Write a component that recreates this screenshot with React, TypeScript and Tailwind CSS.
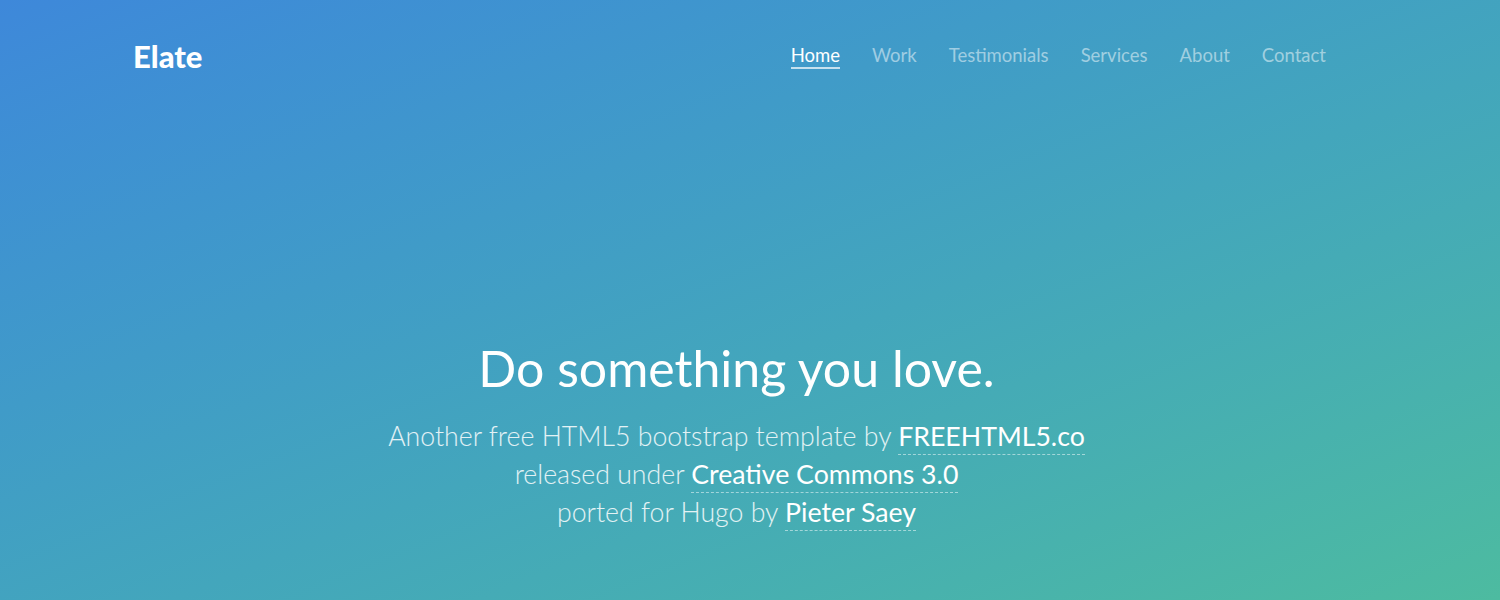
import React from 'react'

const navItems = ['Home', 'Work', 'Testimonials', 'Services', 'About', 'Contact']

function Credit({ href, children }: { href: string; children: React.ReactNode }) {
  return (
    <a
      href={href}
      className="border-b border-dashed border-white/50 pb-[2px] font-normal text-white"
    >
      {children}
    </a>
  )
}

export default function App() {
  return (
    <div
      className="h-[600px] w-full overflow-hidden bg-linear-to-br from-[#3e88da] to-[#4dbba0] text-white"
      style={{ fontFamily: 'Lato, "Noto Sans", sans-serif' }}
    >
      <div className="flex h-full w-[1473px] flex-col">
        <header className="flex items-center justify-between pl-[133px] pr-[147px] pt-[38px]">
          <a href="#" className="text-[31px] font-black leading-[36px]">
            Elate
          </a>
          <nav className="flex items-center gap-[32px] text-[18.5px]">
            {navItems.map((item, i) => (
              <a
                key={item}
                href="#"
                className={
                  i === 0
                    ? 'border-b-2 border-white/70 leading-[24px] text-white'
                    : 'border-b-2 border-transparent leading-[24px] text-white/50'
                }
              >
                {item}
              </a>
            ))}
          </nav>
        </header>

        <main className="flex flex-col items-center pt-[264px] text-center">
          <h1 className="text-[50px] font-normal leading-[60px]">Do something you love.</h1>
          <p className="mt-[19px] text-[26.7px] font-light leading-[38px] text-white/85">
            Another free HTML5 bootstrap template by{' '}
            <Credit href="#">FREEHTML5.co</Credit>
            <br />
            released under <Credit href="#">Creative Commons 3.0</Credit>
            <br />
            ported for Hugo by <Credit href="#">Pieter Saey</Credit>
          </p>
        </main>
      </div>
    </div>
  )
}
